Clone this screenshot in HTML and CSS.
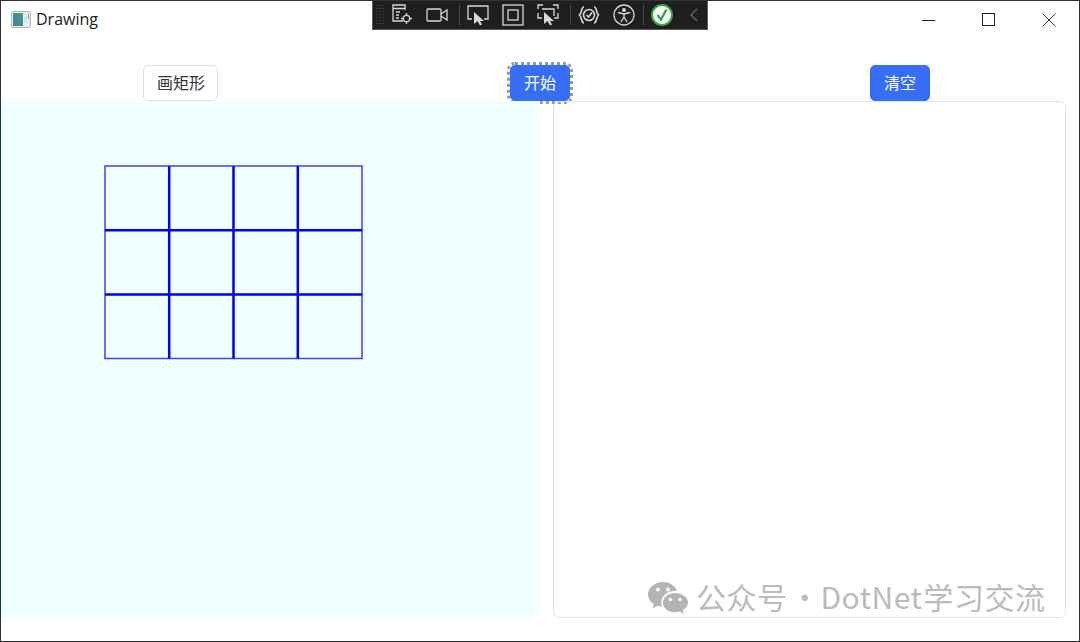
FILE: index.html
```html
<!DOCTYPE html>
<html lang="en">
<head>
  <meta charset="UTF-8" />
  <title>Drawing</title>
  <link rel="stylesheet" href="styles.css">
</head>
<body>
  <div class="window">

    <!-- TITLE BAR -->
    <header class="titlebar">
      <div class="app">
        <svg class="app-icon" width="20" height="17" viewBox="0 0 20 17">
          <defs>
            <linearGradient id="appFill" x1="0" y1="1" x2="1" y2="0">
              <stop offset="0" stop-color="#3f7fa8" />
              <stop offset="1" stop-color="#4f9a80" />
            </linearGradient>
          </defs>
          <rect x="0.5" y="0.5" width="19" height="16" rx="1.5" fill="#e9eced" stroke="#b4b9bc" />
          <rect x="2" y="2" width="10" height="13" fill="url(#appFill)" />
          <rect x="13" y="6" width="3" height="5" fill="#d5e2dc" />
          <rect x="17" y="3" width="1" height="5" fill="#6fa58f" />
        </svg>
        <span>Drawing</span>
      </div>
      <div class="window-btns">
        <svg width="14" height="14" viewBox="0 0 14 14"><path d="M0 7.5H13" stroke="#222" fill="none" /></svg>
        <svg width="14" height="14" viewBox="0 0 14 14"><rect x="0.5" y="0.5" width="12" height="12" stroke="#222" fill="none" /></svg>
        <svg width="14" height="14" viewBox="0 0 14 14"><path d="M0.5 0.5L13.5 13.5M13.5 0.5L0.5 13.5" stroke="#333" fill="none" /></svg>
      </div>
    </header>

    <!-- DEBUG TOOLBAR -->
    <div class="devbar">
      <svg class="grip" width="8" height="22" viewBox="0 0 8 22"><path d="M1 1V22M4 1V22M7 1V22" stroke="#555" stroke-dasharray="1 2" fill="none" /></svg>
      <svg class="tool" width="22" height="22" viewBox="0 0 22 22" fill="none" stroke="#d8d8d8" stroke-width="1.3">
        <path d="M12 17H2V1H14V6M2 4.5H14M5 8H9M5 11H8M5 14H8" />
        <circle cx="15.5" cy="14.5" r="3.2" />
        <path d="M15.5 9V11M15.5 18V20M10 14.5H12M19 14.5H21" />
      </svg>
      <svg class="tool" width="22" height="22" viewBox="0 0 22 22" fill="none" stroke="#d8d8d8" stroke-width="1.3">
        <rect x="1" y="5" width="14" height="12" rx="1" />
        <path d="M15 10L21 6V16L15 12" />
      </svg>
      <i class="sep"></i>
      <svg class="tool" width="22" height="22" viewBox="0 0 22 22" fill="none" stroke="#d8d8d8" stroke-width="1.3">
        <path d="M5 15H1V2H21V15H17" />
        <path d="M7 8V20L10.5 17L13 21.500L15 20.500L13 17H17Z" fill="#d8d8d8" stroke="none" />
      </svg>
      <svg class="tool" width="22" height="22" viewBox="0 0 22 22" fill="none" stroke="#d8d8d8" stroke-width="1.3">
        <rect x="1" y="1" width="20" height="20" />
        <rect x="6" y="6" width="10" height="10" />
      </svg>
      <svg class="tool" width="22" height="22" viewBox="0 0 22 22" fill="none" stroke="#d8d8d8" stroke-width="1.3">
        <path d="M1 5V1H6M16 1H21V5M1 9V14H5M21 9V14H17M5 5H17V12" />
        <path d="M7 8V20L10.500 17L13 21.500L15 20.500L13 17H17Z" fill="#d8d8d8" stroke="none" />
      </svg>
      <i class="sep"></i>
      <svg class="tool" width="22" height="22" viewBox="0 0 22 22" fill="none" stroke="#d8d8d8" stroke-width="1.6">
        <path d="M6 3C3 3 4 9 1.500 11C4 13 3 19 6 19M16 3C19 3 18 9 20.500 11C18 13 19 19 16 19" />
        <circle cx="11" cy="11" r="5.500" />
        <path d="M8.500 11L10.500 13L14 8.500" />
      </svg>
      <svg class="tool" width="22" height="22" viewBox="0 0 22 22" fill="none" stroke="#d8d8d8" stroke-width="1.3">
        <circle cx="11" cy="11" r="10" />
        <circle cx="11" cy="6" r="1.300" fill="#d8d8d8" />
        <path d="M5 8.500L11 10L17 8.500M11 10V13M11 13L8 18M11 13L14 18" />
      </svg>
      <i class="sep last"></i>
      <svg class="tool" width="22" height="22" viewBox="0 0 22 22" fill="none">
        <circle cx="11" cy="11" r="10" fill="#fff" stroke="#35a84a" stroke-width="2" />
        <path d="M6.500 11L10 15.500L15.500 5.500" stroke="#35a84a" stroke-width="2.400" />
      </svg>
      <svg class="tool chevron" width="8" height="14" viewBox="0 0 8 14"><path d="M7 1L1 7L7 13" stroke="#666" stroke-width="1.300" fill="none" /></svg>
    </div>

    <!-- BUTTONS -->
    <div class="actions">
      <div class="cell"><button class="btn outline">画矩形</button></div>
      <div class="cell"><button class="btn primary focused">开始</button></div>
      <div class="cell"><button class="btn primary">清空</button></div>
    </div>

    <!-- CANVASES -->
    <main class="panels">
      <div class="canvas">
        <svg class="grid" width="260" height="195" viewBox="0 0 260 195" fill="none" stroke="#0000ff" stroke-width="1.500">
          <path d="M1 1H258V193.500H1Z" stroke-opacity="0.75" />
          <path d="M65.200 1V193.500M129.500 1V193.500M193.800 1V193.500" stroke-width="2.500" />
          <path d="M1 65.200H258M1 129.500H258" stroke-width="2.500" />
        </svg>
      </div>
      <div class="board"></div>
    </main>

    <!-- WATERMARK -->
    <div class="watermark">
      <svg width="42" height="34" viewBox="0 0 42 34" fill="#b4b4b4">
        <path d="M16 1C7.500 1 1 6.700 1 13.500C1 17.500 3.200 20.800 6.800 23L5.500 27.500L10.500 24.700C12 25.200 13.500 25.400 15 25.500C14.500 24 14.300 22.800 14.300 21.500C14.300 14.800 20.500 10 28 10C28.700 10 29.300 10 30 10.100C28.500 5 22.800 1 16 1Z" />
        <path d="M28 12C20.800 12 16 16.500 16 21.700C16 27 20.800 31.300 28 31.300C29.500 31.300 31 31 32.500 30.500L37 33L35.900 29C39 27 41 24.500 41 21.700C41 16.500 35.200 12 28 12Z" />
        <circle cx="11" cy="8.500" r="2" fill="#fff" />
        <circle cx="21" cy="8.500" r="2" fill="#fff" />
        <circle cx="23.500" cy="18.500" r="1.700" fill="#fff" />
        <circle cx="33" cy="18.500" r="1.700" fill="#fff" />
      </svg>
      <span class="wm-text">公众号<span class="wm-dot">·</span><span class="wm-latin">DotNet</span>学习交流</span>
    </div>
  </div>
</body>
</html>
```

FILE: styles.css
```css
/* Global Styles */
* { box-sizing: border-box; margin: 0; padding: 0; }

body {
  background-color: #fff;
  font-family: 'Noto Sans CJK SC', 'Liberation Sans', sans-serif;
  color: #222;
}

.window {
  position: relative;
  width: 1080px;
  height: 642px;
  border: 1px solid #333;
  background-color: #fff;
  overflow: hidden;
}

/* Title bar */
.titlebar {
  display: flex;
  justify-content: space-between;
  align-items: center;
  height: 37px;
  padding-left: 10px;
}

.app { display: flex; align-items: center; gap: 5px; }
.app span {
  font-family: 'Open Sans', 'Liberation Sans', sans-serif;
  font-size: 16px;
  line-height: 18px;
  margin-top: -2px;
  color: #1a1a1a;
}

.window-btns { display: flex; gap: 46px; padding-right: 23px; }

/* Debug toolbar */
.devbar {
  position: absolute;
  top: -1px;
  left: 371px;
  width: 336px;
  height: 30px;
  display: flex;
  align-items: center;
  padding-left: 3px;
  background-color: #1f1f1f;
  border: 1px solid #5a5a5a;
}

.devbar .tool { margin-left: 13px; flex: none; }
.devbar .grip + .tool { margin-left: 7px; }
.devbar .sep {
  width: 1px;
  height: 20px;
  margin-left: 11px;
  margin-right: -6px;
  background-color: #4a4a4a;
}
.devbar .sep.last { margin-left: 8px; margin-right: -6px; }
.devbar .chevron { margin-left: 17px; }

/* Buttons */
.actions {
  display: grid;
  grid-template-columns: repeat(3, 1fr);
  margin-top: 27px;
  margin-left: -1px;
  margin-right: -1px;
}

.cell { display: flex; justify-content: center; }

.btn {
  height: 36px;
  padding: 0 13px 3px;
  font-family: inherit;
  font-size: 16px;
  color: #333;
  background-color: #fff;
  border: 1px solid #dcdfe6;
  border-radius: 5px;
}

.outline { margin-left: 1px; padding: 0 12px 3px 13px; }

.primary {
  padding: 0 13px 3px;
  color: #fff;
  background-color: #366ff5;
  border-color: #366ff5;
}

.focused { outline: 3px dotted #999; outline-offset: 0; }

/* Canvases */
.panels {
  display: flex;
  height: 517px;
}

.canvas {
  width: 539px;
  margin-bottom: 1px;
  padding: 64px 0 0 103px;
  background-color: #f0ffff;
}

.grid { display: block; }

.board {
  width: 513px;
  margin-left: 13px;
  border: 1px solid #e2e4e8;
  border-radius: 6px;
}

/* Watermark */
.watermark {
  position: absolute;
  left: 646px;
  top: 580px;
  display: flex;
  align-items: center;
  gap: 7px;
  font-size: 30px;
  line-height: 34px;
  white-space: nowrap;
  color: #bbb;
}

.wm-text { margin-top: -4px; letter-spacing: 0.6px; }
.wm-dot { margin: 0 -2px 0 2px; }
.wm-latin { letter-spacing: 0.5px; margin-left: 2px; margin-right: 1px; }
```
